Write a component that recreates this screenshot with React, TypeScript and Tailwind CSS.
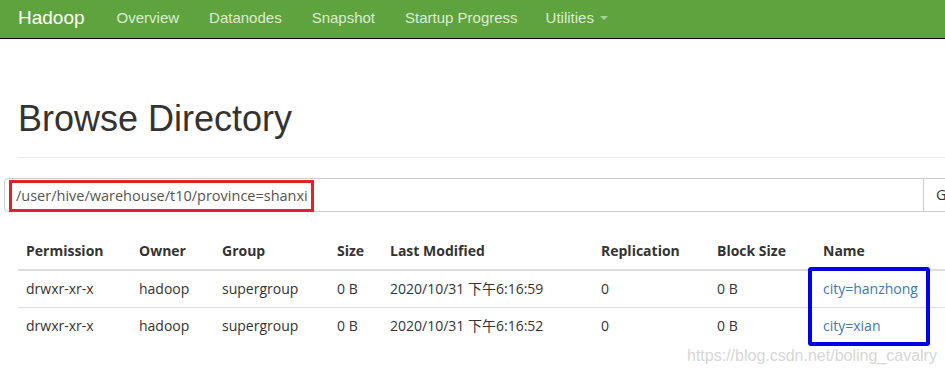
import React from 'react';

const navItems = ['Overview', 'Datanodes', 'Snapshot', 'Startup Progress'];

interface Entry {
  permission: string;
  owner: string;
  group: string;
  size: string;
  modified: string;
  replication: string;
  blockSize: string;
  name: string;
}

const entries: Entry[] = [
  {
    permission: 'drwxr-xr-x',
    owner: 'hadoop',
    group: 'supergroup',
    size: '0 B',
    modified: '2020/10/31 下午6:16:59',
    replication: '0',
    blockSize: '0 B',
    name: 'city=hanzhong',
  },
  {
    permission: 'drwxr-xr-x',
    owner: 'hadoop',
    group: 'supergroup',
    size: '0 B',
    modified: '2020/10/31 下午6:16:52',
    replication: '0',
    blockSize: '0 B',
    name: 'city=xian',
  },
];

// column widths taken from the screenshot, cell padding included
const columns = [
  { label: 'Permission', w: 'w-[113px]' },
  { label: 'Owner', w: 'w-[83px]' },
  { label: 'Group', w: 'w-[115px]' },
  { label: 'Size', w: 'w-[53px]' },
  { label: 'Last Modified', w: 'w-[211px]' },
  { label: 'Replication', w: 'w-[116px]' },
  { label: 'Block Size', w: 'w-[106px]' },
  { label: 'Name', w: 'w-[140px]' },
];

export default function App() {
  return (
    <div className="relative w-[945px] h-[374px] overflow-hidden bg-white font-['Liberation_Sans',sans-serif] text-[#333]">
      {/* Navbar */}
      <div className="h-[39px] bg-[#5fa33e] border-b border-black flex items-center pb-[2px]">
        <span className="ml-[18px] mr-[32px] text-[19px] text-white">Hadoop</span>
        <div className="flex items-center gap-[30px] text-[15px] text-[#dcecd2]">
          {navItems.map((item) => (
            <span key={item}>{item}</span>
          ))}
          <span className="flex items-center gap-[6px] -ml-[2px]">
            Utilities
            <span className="w-0 h-0 border-l-[4px] border-r-[4px] border-t-[4px] border-l-transparent border-r-transparent border-t-[#a9cf96]" />
          </span>
        </div>
      </div>

      {/* Header */}
      <div className="pl-[18px]">
        <h1 className="mt-[60px] text-[36px] leading-[40px]">Browse Directory</h1>
        <div className="mt-[18px] w-[1000px] border-t border-[#eee]" />
      </div>

      {/* Path input */}
      <div className="ml-[4px] mt-[20px] w-[1000px] h-[34px] flex border border-[#ccc] rounded-[4px] font-['Open_Sans',sans-serif] text-[14.5px] text-[#555]">
        <div className="w-[918px] flex items-center pl-[11px] pt-[1px]">/user/hive/warehouse/t10/province=shanxi</div>
        <div className="flex items-center pl-[12px] border-l border-[#ccc] text-[#333]">Go!</div>
      </div>

      {/* Listing */}
      <table className="ml-[18px] mt-[21px] w-[937px] table-fixed border-collapse font-['Open_Sans','Noto_Sans_CJK_SC',sans-serif] text-[14px] leading-[20px]">
        <thead>
          <tr className="border-b-2 border-[#ddd]">
            {columns.map((c) => (
              <th key={c.label} className={`${c.w} px-[8px] py-[8px] text-left font-bold whitespace-nowrap`}>
                {c.label}
              </th>
            ))}
          </tr>
        </thead>
        <tbody>
          {entries.map((e, i) => (
            <tr key={e.name} className={i === 0 ? 'border-b border-[#ddd]' : ''}>
              <td className="p-[8px] whitespace-nowrap">{e.permission}</td>
              <td className="p-[8px] whitespace-nowrap">{e.owner}</td>
              <td className="p-[8px] whitespace-nowrap">{e.group}</td>
              <td className="p-[8px] whitespace-nowrap">{e.size}</td>
              <td className="p-[8px] whitespace-nowrap">{e.modified}</td>
              <td className="p-[8px] whitespace-nowrap">{e.replication}</td>
              <td className="p-[8px] whitespace-nowrap">{e.blockSize}</td>
              <td className="p-[8px] whitespace-nowrap text-[#4278b4]">{e.name}</td>
            </tr>
          ))}
        </tbody>
      </table>

      {/* Annotations drawn over the screenshot */}
      <div className="absolute left-[9px] top-[180px] w-[305px] h-[32px] border-[3px] border-[#e3212b]" />
      <div className="absolute left-[808px] top-[267px] w-[122px] h-[79px] border-[4px] border-[#0000e6] rounded-[3px]" />
      <div className="absolute left-[687px] top-[346px] text-[16px] leading-[20px] text-[#d6d6d6] [text-shadow:0_0_1px_#fff]">
        https://blog.csdn.net/boling_cavalry
      </div>
    </div>
  );
}
